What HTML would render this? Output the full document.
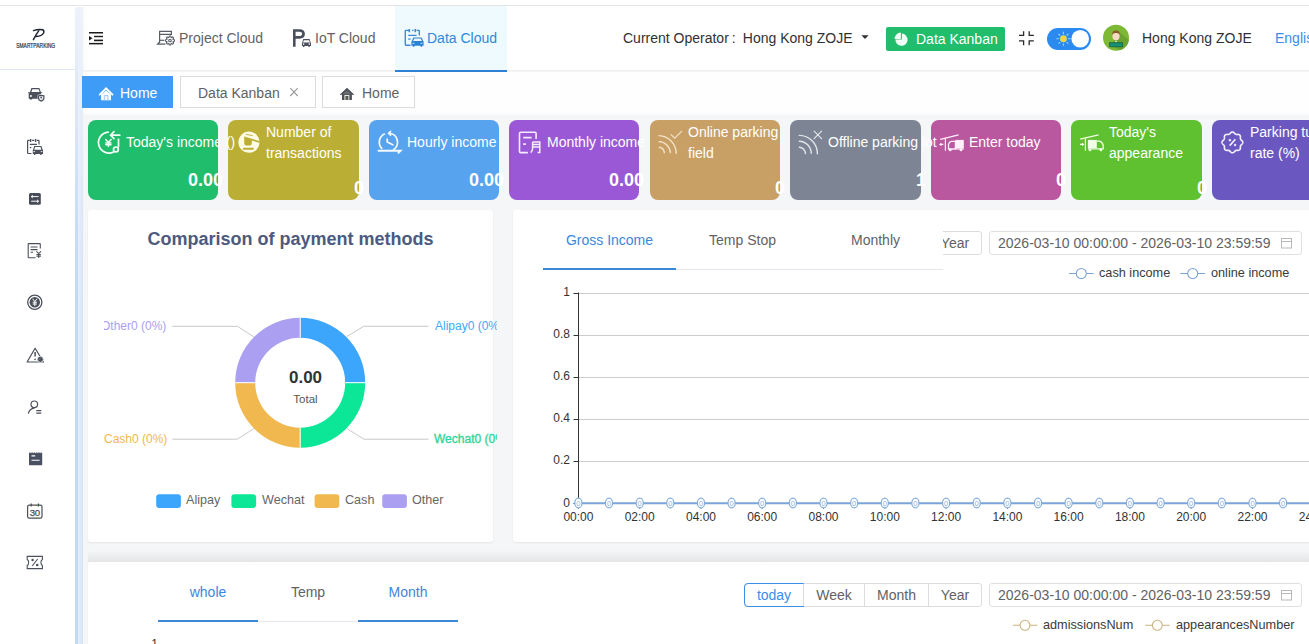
<!DOCTYPE html>
<html><head><meta charset="utf-8">
<style>
*{box-sizing:border-box;margin:0;padding:0}
html,body{width:1309px;height:644px;overflow:hidden;background:#fff;font-family:"Liberation Sans",sans-serif;position:relative}
.abs{position:absolute}
#topline{left:0;top:5px;width:1309px;height:1px;background:#e4e4e4}
#sidebar{left:0;top:6px;width:75px;height:638px;background:#fff}
#sbshadow{left:75px;top:7px;width:8px;height:637px;background:linear-gradient(#edf3fb,#dce8f7 100px,#c8dcf4 220px,#c2d8f3 300px)}
#sbshadow2{left:78px;top:7px;width:10px;height:637px;background:linear-gradient(to right,rgba(238,240,250,0.9),rgba(243,244,245,0.3) 60%,rgba(243,244,245,0))}
#logo{left:0;top:6px;width:75px;height:64px;border-bottom:1px solid #dde6f3}
#header{left:81px;top:6px;width:1228px;height:64px;background:#fff}
#hdrline{left:81px;top:70px;width:1228px;height:2px;background:linear-gradient(#eeeeee,#f6f6f6)}
.nav{top:6px;height:64px;font-size:14px;color:#606266;line-height:64px;white-space:nowrap}
#content{left:81px;top:112px;width:1228px;height:532px;background:linear-gradient(#fff,#f5f6f7 4px,#f5f6f7)}
#tabsbar{left:81px;top:72px;width:1228px;height:40px;background:#fefefe}
.tab{top:76px;height:32px;border:1px solid #dcdcdc;font-size:14px;color:#606266;line-height:32px;white-space:nowrap;background:#fff}
.card{top:120px;height:80px;border-radius:8px}
.ct{font-size:14px;color:#fff;white-space:nowrap;line-height:21px}
.cv{font-size:18px;font-weight:bold;color:#fff;top:167px;white-space:nowrap;line-height:24px}
.panel{background:#fff;border-radius:3px;box-shadow:0 1px 2px rgba(0,0,0,0.07)}
.axis{font-size:12px;color:#333;white-space:nowrap}
.lbl{font-size:12px;white-space:nowrap;line-height:14px}
.leg{top:493px;font-size:12.6px;color:#666;white-space:nowrap;line-height:15px}
.rtab{top:230px;width:133px;text-align:center;font-size:14px;color:#606266;line-height:20px;white-space:nowrap}
.bgrp{display:flex;height:24px;border:1px solid #dcdcdc;border-radius:3px;background:#fff}
.bgrp span{display:block;height:22px;line-height:23px;font-size:14px;color:#606266;text-align:center;border-left:1px solid #dcdcdc;white-space:nowrap}
.bgrp span:nth-child(1){width:58px}.bgrp span:nth-child(2){width:61px}.bgrp span:nth-child(3){width:64px}.bgrp span:nth-child(4){width:53px}
.bgrp span:first-child{border-left:none}
.bgrp span.on{color:#3a8ee6;outline:1px solid #3a8ee6;outline-offset:0;border-radius:3px 0 0 3px}
.dp{width:313px;height:24px;border:1px solid #e0e0e0;border-radius:3px;font-size:14px;color:#606266;line-height:22px;padding-left:8px;white-space:nowrap;background:#fff}
.leg2{font-size:12.7px;color:#3a3a3a;margin-top:1px;white-space:nowrap;line-height:15px}
.ylab{left:520px;width:50px;text-align:right;font-size:12px;color:#333;line-height:14px}
.xlab{width:60px;text-align:center;font-size:12px;color:#333;line-height:14px}
.btab{top:582px;width:100px;text-align:center;font-size:14px;color:#606266;line-height:20px;white-space:nowrap}
</style></head><body>
<div class="abs" id="topline"></div>
<div class="abs" id="sidebar"></div>
<div class="abs" id="logo"></div>
<div class="abs" id="header"></div>
<div class="abs" id="hdrline"></div>
<div class="abs" id="tabsbar"></div>
<div class="abs" id="content"></div>
<div class="abs" id="sbshadow"></div><div class="abs" id="sbshadow2"></div>

<!-- nav -->
<div class="abs nav" style="left:179px">Project Cloud</div>
<div class="abs nav" style="left:315px">IoT Cloud</div>
<div class="abs" style="left:395px;top:6px;width:112px;height:64px;background:#effaff"></div><div class="abs" style="left:395px;top:70px;width:112px;height:2px;background:#3081d6"></div>
<div class="abs nav" style="left:427px;color:#2f88d9">Data Cloud</div>
<div class="abs nav" style="left:623px;color:#303133">Current Operator<span style="display:inline-block;width:14px;padding-left:3px">:</span>Hong Kong ZOJE</div>
<div class="abs" style="left:886px;top:27px;width:119px;height:24px;background:#1fbd6c;border-radius:2px"></div>
<div class="abs nav" style="left:916px;top:7px;color:#fff">Data Kanban</div>
<div class="abs nav" style="left:1142px;color:#303133">Hong Kong ZOJE</div>
<div class="abs nav" style="left:1275px;color:#3a8ee6">English</div>

<!-- tabs -->
<div class="abs tab" style="left:82px;width:91px;background:#3e9cf6;border-color:#3e9cf6;color:#fff;padding-left:37px">Home</div>
<div class="abs tab" style="left:180px;width:136px;padding-left:17px">Data Kanban</div>
<div class="abs tab" style="left:322px;width:93px;padding-left:39px">Home</div>

<!-- cards -->
<div class="abs card" style="left:88px;width:130px;background:#1fbd6c"><div class="abs cv" style="right:-5px;top:48px">0.00</div></div>
<div class="abs card" style="left:228px;width:131px;background:#bbae35"><div class="abs cv" style="right:-5px;top:56px">0</div></div>
<div class="abs card" style="left:369px;width:130px;background:#57a3ee"><div class="abs cv" style="right:-5px;top:48px">0.00</div></div>
<div class="abs card" style="left:509px;width:130px;background:#9a57d6"><div class="abs cv" style="right:-5px;top:48px">0.00</div></div>
<div class="abs card" style="left:650px;width:130px;background:#c8a066"><div class="abs cv" style="right:-5px;top:56px">0</div></div>
<div class="abs card" style="left:790px;width:131px;background:#7d8594"><div class="abs cv" style="right:-5px;top:48px">1</div></div>
<div class="abs card" style="left:931px;width:130px;background:#b9579f"><div class="abs cv" style="right:-5px;top:48px">0</div></div>
<div class="abs card" style="left:1071px;width:131px;background:#5fc030"><div class="abs cv" style="right:-5px;top:56px">0</div></div>
<div class="abs card" style="left:1212px;width:130px;background:#6a58c0"><div class="abs cv" style="right:-5px;top:56px">0</div></div>

<div class="abs ct" style="left:126px;top:132px">Today's income ()</div>
<div class="abs ct" style="left:266px;top:122px">Number of<br>transactions</div>
<div class="abs ct" style="left:407px;top:132px">Hourly income</div>
<div class="abs ct" style="left:547px;top:132px">Monthly income</div>
<div class="abs ct" style="left:688px;top:122px">Online parking<br>field</div>
<div class="abs ct" style="left:828px;top:132px">Offline parking lot</div>
<div class="abs ct" style="left:969px;top:132px">Enter today</div>
<div class="abs ct" style="left:1109px;top:122px">Today's<br>appearance</div>
<div class="abs ct" style="left:1250px;top:122px">Parking turnover<br>rate (%)</div>

<!-- panels -->
<div class="abs panel" style="left:88px;top:210px;width:405px;height:332px"></div>
<div class="abs panel" style="left:513px;top:210px;width:800px;height:332px"></div>
<div class="abs" style="left:88px;top:551px;width:1221px;height:11px;background:linear-gradient(#f4f5f6,#e4e5e7);border-top-left-radius:3px"></div>
<div class="abs panel" style="left:88px;top:562px;width:1225px;height:90px"></div>


<!-- left panel content -->
<div class="abs" style="left:88px;top:227px;width:405px;text-align:center;font-size:18px;font-weight:bold;color:#4c5a7e;white-space:nowrap;line-height:24px">Comparison of payment methods</div>
<div class="abs" style="left:104px;top:300px;width:393px;height:160px;overflow:hidden">
 <div class="abs lbl" style="left:-3px;top:19px;color:#aa9ff0">Other0 (0%)</div>
 <div class="abs lbl" style="left:0px;top:132px;color:#efb84d">Cash0 (0%)</div>
 <div class="abs lbl" style="left:331px;top:19px;color:#3fa9f5">Alipay0 (0%)</div>
 <div class="abs lbl" style="left:330px;top:132px;color:#2fd69a;-webkit-text-stroke:0.35px #2fd69a">Wechat0 (0%)</div>
</div>
<div class="abs" style="left:255.5px;top:368px;width:100px;text-align:center;font-size:17px;font-weight:bold;color:#333;line-height:20px">0.00</div>
<div class="abs" style="left:255.5px;top:392px;width:100px;text-align:center;font-size:11.5px;color:#555;line-height:14px">Total</div>
<div class="abs leg" style="left:186px">Alipay</div>
<div class="abs leg" style="left:262px">Wechat</div>
<div class="abs leg" style="left:345px">Cash</div>
<div class="abs leg" style="left:412px">Other</div>

<!-- right panel -->
<div class="abs bgrp" style="left:744px;top:231px"><span class="on">today</span><span>Week</span><span>Month</span><span>Year</span></div>
<div class="abs" style="left:513px;top:215px;width:430px;height:60px;background:#fff"></div>
<div class="abs" style="left:543px;top:269px;width:400px;height:1px;background:#e4e7ed"></div>
<div class="abs" style="left:543px;top:268px;width:133px;height:2px;background:#3a87d6"></div>
<div class="abs rtab" style="left:543px;color:#3d86d8">Gross Income</div>
<div class="abs rtab" style="left:676px">Temp Stop</div>
<div class="abs rtab" style="left:809px">Monthly</div>
<div class="abs dp" style="left:989px;top:231px">2026-03-10 00:00:00 - 2026-03-10 23:59:59</div>
<div class="abs leg2" style="left:1099px;top:265px">cash income</div>
<div class="abs leg2" style="left:1211px;top:265px">online income</div>
<div class="abs ylab" style="top:285px">1</div>
<div class="abs ylab" style="top:327px">0.8</div>
<div class="abs ylab" style="top:369px">0.6</div>
<div class="abs ylab" style="top:411px">0.4</div>
<div class="abs ylab" style="top:453px">0.2</div>
<div class="abs ylab" style="top:496px">0</div>
<div class="abs xlab" style="left:548.4px;top:510px">00:00</div>
<div class="abs xlab" style="left:609.7px;top:510px">02:00</div>
<div class="abs xlab" style="left:671.0px;top:510px">04:00</div>
<div class="abs xlab" style="left:732.2px;top:510px">06:00</div>
<div class="abs xlab" style="left:793.5px;top:510px">08:00</div>
<div class="abs xlab" style="left:854.8px;top:510px">10:00</div>
<div class="abs xlab" style="left:916.1px;top:510px">12:00</div>
<div class="abs xlab" style="left:977.4px;top:510px">14:00</div>
<div class="abs xlab" style="left:1038.6px;top:510px">16:00</div>
<div class="abs xlab" style="left:1099.9px;top:510px">18:00</div>
<div class="abs xlab" style="left:1161.2px;top:510px">20:00</div>
<div class="abs xlab" style="left:1222.5px;top:510px">22:00</div>
<div class="abs xlab" style="left:1283.8px;top:510px">24:00</div>

<!-- bottom panel -->
<div class="abs" style="left:158px;top:621px;width:300px;height:1px;background:#e4e7ed"></div>
<div class="abs" style="left:158px;top:620px;width:100px;height:2px;background:#3a87d6"></div>
<div class="abs" style="left:358px;top:620px;width:100px;height:2px;background:#3a87d6"></div>
<div class="abs btab" style="left:158px;color:#3d86d8">whole</div>
<div class="abs btab" style="left:258px">Temp</div>
<div class="abs btab" style="left:358px;color:#3d86d8">Month</div>
<div class="abs bgrp" style="left:744px;top:583px"><span class="on">today</span><span>Week</span><span>Month</span><span>Year</span></div>
<div class="abs dp" style="left:989px;top:583px">2026-03-10 00:00:00 - 2026-03-10 23:59:59</div>
<div class="abs leg2" style="left:1043px;top:617px">admissionsNum</div>
<div class="abs leg2" style="left:1176px;top:617px">appearancesNumber</div>
<div class="abs ylab" style="left:108px;width:50px;top:637px">1</div>

<svg class="abs" style="left:0;top:0" width="1309" height="644" viewBox="0 0 1309 644">
<!-- hamburger -->
<g transform="translate(84,26)" fill="#1b1b1b">
<rect x="5" y="6" width="14" height="1.5"/><rect x="10" y="9.8" width="9" height="1.4"/><rect x="10" y="13.6" width="9" height="1.6"/><rect x="5" y="16.9" width="14" height="1.5"/><path d="M5 10 L8.6 12.2 L5 14.4Z"/>
</g>
<!-- project cloud icon -->
<g transform="translate(154,26)" fill="none" stroke="#575c66" stroke-width="1.2">
<path d="M5.6 17 V5.4 H17.4 V8.4 H5.6"/><path d="M5.6 16 L3.6 18.2 H11.4"/><path d="M5.6 14.3 H10.4"/>
<path d="M19.15 13.52 L20.44 13.74 L20.44 15.26 L19.15 15.48 L18.92 16.04 L19.67 17.10 L18.60 18.17 L17.54 17.42 L16.98 17.65 L16.76 18.94 L15.24 18.94 L15.02 17.65 L14.46 17.42 L13.40 18.17 L12.33 17.10 L13.08 16.04 L12.85 15.48 L11.56 15.26 L11.56 13.74 L12.85 13.52 L13.08 12.96 L12.33 11.90 L13.40 10.83 L14.46 11.58 L15.02 11.35 L15.24 10.06 L16.76 10.06 L16.98 11.35 L17.54 11.58 L18.60 10.83 L19.67 11.90 L18.92 12.96Z" stroke-width="1.1" stroke-linejoin="round"/><circle cx="16" cy="14.5" r="1.3" stroke-width="1.1"/>
</g>
<!-- IoT P icon -->
<g transform="translate(288,26)" fill="#4a505e">
<path d="M5 3.2 H11.5 C15 3.2 16.9 5.2 16.9 8 C16.9 10.8 15 12.7 11.5 12.7 H7.6 V20.7 H5 Z M7.6 5.8 V10.1 H11.3 C13.1 10.1 14.1 9.3 14.1 8 C14.1 6.6 13.1 5.8 11.3 5.8 Z"/>
<path d="M15.2 13.1 H21.6 L22.6 16.4 L23 17 V20 H21.8 V20.9 H20.4 V20 H16.4 V20.9 H15 V20 H13.9 V17 L14.3 16.4 Z M15.8 14.2 L15.1 16.4 H21.9 L21.1 14.2 Z" fill-rule="evenodd"/>
<circle cx="15.6" cy="18.1" r="0.8" fill="#fff"/><circle cx="21.3" cy="18.1" r="0.8" fill="#fff"/>
</g>
<!-- data cloud icon -->
<g transform="translate(400,26)">
<path d="M9 4.4 H6 Q5.3 4.4 5.3 5.1 V18.6 Q5.3 19.3 6 19.3 H10.5 M12 4.4 H13.5 M16.6 4.4 H18.6 Q19.3 4.4 19.3 5.1 V9.6" fill="none" stroke="#3a8ad8" stroke-width="1.4"/>
<path d="M9.3 3.1 V6.3 M15.3 3.1 V6.3" stroke="#3a8ad8" stroke-width="1.6"/>
<path d="M8.2 9.3 H16.6 M8.2 13.2 H10.6" stroke="#3a8ad8" stroke-width="1.2"/>
<path d="M13.4 11.4 H21.6 L23.2 15 L23.6 15.4 V19.8 H22.2 V20.8 H20.6 V19.8 H14.4 V20.8 H12.8 V19.8 H11.4 V15.4 L11.8 15 Z" fill="#2a82d6"/>
<path d="M14.2 12.4 H20.8 L21.9 14.9 H13.1 Z" fill="#eaf6ff"/>
<rect x="12.6" y="16.8" width="1.8" height="1" fill="#cfefff"/><rect x="20.6" y="16.8" width="1.8" height="1" fill="#cfefff"/>
</g>
<!-- kanban pie -->
<g transform="translate(888,28)" fill="#f2fff6">
<path d="M13.9 5.6 A6.1 6.1 0 1 1 7.4 11.6 H13.9 Z"/>
<path d="M12.9 4.6 V10.9 H6.6 A6.3 6.3 0 0 1 12.9 4.6 Z"/>
</g>
<path d="M861.4 35.3 H868.6 L865 39Z" fill="#303133"/>
<!-- compress -->
<g transform="translate(1014,26)" fill="none" stroke="#2a2a2a" stroke-width="1.3">
<path d="M5 9.3 H9.6 V5.2 M15.2 5.2 V9.3 H19.8 M5 14.9 H9.6 V19.3 M19.8 14.9 H15.2 V19.3"/>
</g>
<!-- toggle -->
<rect x="1047" y="28" width="44" height="22" rx="11" fill="#2b8af0"/>
<circle cx="1080.2" cy="38.8" r="8.8" fill="#fff"/>
<g transform="translate(1063.4,38.8)" stroke="#9bd4f7" stroke-width="1.1">
<path d="M0 -7 V-4.6 M0 4.6 V7 M-7 0 H-4.6 M4.6 0 H7 M-4.9 -4.9 L-3.3 -3.3 M3.3 3.3 L4.9 4.9 M-4.9 4.9 L-3.3 3.3 M3.3 -3.3 L4.9 -4.9"/>
<circle r="3.2" fill="#f3d23a" stroke="#cfe48a" stroke-width="0.6"/>
</g>
<!-- avatar -->
<circle cx="1116" cy="37.7" r="13" fill="#7db935"/>
<path d="M1118 31 L1129 40 A13 13 0 0 1 1120 50.2 L1112 46 Z" fill="#6aa02f" opacity="0.9"/>
<path d="M1109.5 42.6 H1122.5 V46.8 H1109.5 Z" fill="#169072" stroke="#0d4f3c" stroke-width="0.6"/>
<ellipse cx="1116" cy="36" rx="3.6" ry="4.4" fill="#f4dcc4"/>
<path d="M1112.2 35 Q1111.8 30.5 1116 30.4 Q1120.3 30.5 1119.8 35 Q1118.5 32.6 1116 33 Q1113.5 32.6 1112.2 35Z" fill="#8a5a2a"/>
<path d="M1115 41 H1117 L1116 42.5Z" fill="#fff"/>

<!-- tab icons -->
<g transform="translate(94,80)">
<path d="M12.1 10.6 L17 14.6 V20.3 H7.1 V14.6 Z" fill="#fff"/>
<path d="M5.7 14.6 L12.1 8.4 L18.5 14.6" fill="none" stroke="#fff" stroke-width="1.9" stroke-linecap="round"/>
<rect x="10.2" y="15.7" width="3.8" height="4.6" fill="#f6f2ff" stroke="#7ab6fa" stroke-width="0.7"/>
</g>
<path d="M290.3 88.2 L297.7 96 M297.7 88.2 L290.3 96" stroke="#9a9a9a" stroke-width="1.1"/>
<g transform="translate(334,80)">
<path d="M13 7.8 L20.1 14.4 L19 15.3 L17.9 14.3 V19.9 H8 V14.3 L6.9 15.3 L5.9 14.4 Z" fill="#4d4f56"/>
<path d="M13 10.2 L17 13.9 V14.2 H9 V13.9 Z" fill="#6b6e76"/>
<rect x="10.4" y="15" width="5" height="4.9" fill="#e9ebe6"/><rect x="11.4" y="16" width="3" height="3.9" fill="#595c55"/>
</g>
<!-- card icons -->
<g transform="translate(94,126)" fill="none" stroke="#f4fff8" stroke-width="1.7" stroke-linecap="round">
<path d="M14.2 6.1 A10.5 10.5 0 1 0 19.6 26.0"/>
<path d="M24.5 13.3 V20.6"/>
<circle cx="21.9" cy="23.4" r="2.4"/>
<path d="M25.8 9.2 H16.8 M20 5.7 L16.6 9.2 L20 12.6"/>
<path d="M11.7 13.5 L14.4 16.5 L17.1 13.5 M14.4 16.5 V20.5 M11.8 17 H17 M11.8 18.7 H17" stroke-width="1.5"/>
</g>
<g transform="translate(234,126)">
<circle cx="15" cy="16.2" r="10.6" fill="#fdfbe6"/>
<path d="M11.8 8.3 L18.8 9.7" stroke="#bcae35" stroke-width="0.9"/>
<path d="M10.2 10.4 L26 15.2 L25.8 16.9 L17.8 14.6 V17.6 Q17.8 19.4 16 19.4 H12 Q10.2 19.4 10.2 17.6 Z" fill="#bcae35"/>
<rect x="8.8" y="21.7" width="11.1" height="2.1" rx="1" fill="#bcae35"/>
</g>
<g transform="translate(374,126)" fill="none" stroke="#f4faff" stroke-width="1.7" stroke-linecap="round">
<path d="M10.33 8.06 A9.1 9.1 0 0 0 7.74 22.4"/>
<path d="M15.98 7.24 A9.1 9.1 0 0 1 19.62 23.65"/>
<path d="M16.6 5.4 L14.6 7.3 L16.6 9.2" stroke-width="1.6"/>
<path d="M13.2 13.2 V16 L18.8 18.8"/>
<path d="M4.5 24.8 H26.6 L24.4 26.9" stroke-width="1.9"/>
</g>
<g transform="translate(514,126)" fill="none" stroke="#f6ecff" stroke-width="1.6">
<path d="M22.1 12.9 V7.4 Q22.1 6.2 20.9 6.2 H6.7 Q5.5 6.2 5.5 7.4 V25.4 Q5.5 26.6 6.7 26.6 H13.9"/>
<path d="M9.2 11.7 H17.6 M9.2 18.1 H11.9" stroke-width="1.7"/>
<path d="M18.6 16 H25.8 V26.4 H23.6 M18.6 16 V22.5 Q18.6 25 16.7 26.6 M19 18.4 H25.6 M19 20.9 H25.6" stroke-width="1.5"/>
</g>
<g transform="translate(654,122)" fill="none" stroke="#f8ead3" stroke-width="1.4" stroke-linecap="round" opacity="0.9">
<path d="M5 13.6 A17.8 17.8 0 0 1 22.2 31.2"/>
<path d="M5 19.6 A11.8 11.8 0 0 1 16.4 30.6"/>
<path d="M5.3 25.3 A6 6 0 0 1 10.3 30.8"/>
<path d="M17.1 12.6 L20.7 16.2 L27.6 9.3" stroke-width="1.2"/>
</g>
<g transform="translate(794,122)" fill="none" stroke="#eef0f4" stroke-width="1.4" stroke-linecap="round" opacity="0.9">
<path d="M5.3 13.4 A18.3 18.3 0 0 1 23.4 31.8"/>
<path d="M5.3 19.2 A12.1 12.1 0 0 1 17.2 31.2"/>
<path d="M5.3 25.3 A6.2 6.2 0 0 1 11.4 31.5"/>
<path d="M20.1 9.2 L27.6 16.7 M27.6 9.2 L20.1 16.7" stroke-width="1.2"/>
</g>
<g transform="translate(934,126)" stroke="#fff0fb" stroke-width="1.2" fill="none">
<path d="M6.2 13.3 L24.6 8.9" stroke-width="1.3"/>
<path d="M11.4 12.3 V24.8"/>
<path d="M9.4 18.4 H6 M7.4 17.2 L6 18.4 L7.4 19.6"/>
<path d="M21.4 15.3 H17.3 Q15.3 15.6 14.5 18.5 V23 H21.4 Z" stroke-width="1.3"/>
<rect x="21.4" y="13.9" width="8.4" height="8.2" fill="#fff0fb" stroke="none"/>
<path d="M21.4 22.9 H29.8" stroke-width="1.3"/>
<circle cx="16.2" cy="23.9" r="1.4" fill="#fff0fb" stroke="none"/><circle cx="27" cy="23.9" r="1.4" fill="#fff0fb" stroke="none"/>
</g>
<g transform="translate(1074,126)" stroke="#f2fde8" stroke-width="1.2" fill="none">
<path d="M6.2 13.2 L24.6 8.9" stroke-width="1.3"/>
<path d="M11.4 12.3 V24.7"/>
<path d="M6 18.4 H9.4 M8 17.2 L9.4 18.4 L8 19.6"/>
<rect x="13.9" y="13.9" width="8.9" height="8.2" fill="#f2fde8" stroke="none"/>
<path d="M22.8 15.2 H25.6 Q28.7 16.5 29.2 19.5 V22.9 H14" stroke-width="1.3"/>
<circle cx="16" cy="23.9" r="1.4" fill="#f2fde8" stroke="none"/><circle cx="26.9" cy="23.9" r="1.4" fill="#f2fde8" stroke="none"/>
</g>
<g transform="translate(1214,126)" fill="none" stroke="#f1efff" stroke-width="1.6">
<path d="M18.40 6.00 L18.73 6.03 L19.05 6.12 L19.36 6.26 L19.66 6.45 L19.94 6.67 L20.21 6.92 L20.46 7.18 L20.70 7.43 L20.94 7.67 L21.17 7.89 L21.40 8.07 L21.64 8.21 L21.90 8.32 L22.17 8.39 L22.46 8.42 L22.78 8.43 L23.11 8.43 L23.46 8.42 L23.82 8.42 L24.19 8.43 L24.55 8.48 L24.89 8.55 L25.21 8.67 L25.50 8.84 L25.75 9.05 L25.96 9.30 L26.13 9.59 L26.25 9.91 L26.32 10.25 L26.37 10.61 L26.38 10.98 L26.38 11.34 L26.37 11.69 L26.37 12.02 L26.38 12.34 L26.41 12.63 L26.48 12.90 L26.59 13.16 L26.73 13.40 L26.91 13.63 L27.13 13.86 L27.37 14.10 L27.62 14.34 L27.88 14.59 L28.13 14.86 L28.35 15.14 L28.54 15.44 L28.68 15.75 L28.77 16.07 L28.80 16.40 L28.77 16.73 L28.68 17.05 L28.54 17.36 L28.35 17.66 L28.13 17.94 L27.88 18.21 L27.62 18.46 L27.37 18.70 L27.13 18.94 L26.91 19.17 L26.73 19.40 L26.59 19.64 L26.48 19.90 L26.41 20.17 L26.38 20.46 L26.37 20.78 L26.37 21.11 L26.38 21.46 L26.38 21.82 L26.37 22.19 L26.32 22.55 L26.25 22.89 L26.13 23.21 L25.96 23.50 L25.75 23.75 L25.50 23.96 L25.21 24.13 L24.89 24.25 L24.55 24.32 L24.19 24.37 L23.82 24.38 L23.46 24.38 L23.11 24.37 L22.78 24.37 L22.46 24.38 L22.17 24.41 L21.90 24.48 L21.64 24.59 L21.40 24.73 L21.17 24.91 L20.94 25.13 L20.70 25.37 L20.46 25.62 L20.21 25.88 L19.94 26.13 L19.66 26.35 L19.36 26.54 L19.05 26.68 L18.73 26.77 L18.40 26.80 L18.07 26.77 L17.75 26.68 L17.44 26.54 L17.14 26.35 L16.86 26.13 L16.59 25.88 L16.34 25.62 L16.10 25.37 L15.86 25.13 L15.63 24.91 L15.40 24.73 L15.16 24.59 L14.90 24.48 L14.63 24.41 L14.34 24.38 L14.02 24.37 L13.69 24.37 L13.34 24.38 L12.98 24.38 L12.61 24.37 L12.25 24.32 L11.91 24.25 L11.59 24.13 L11.30 23.96 L11.05 23.75 L10.84 23.50 L10.67 23.21 L10.55 22.89 L10.48 22.55 L10.43 22.19 L10.42 21.82 L10.42 21.46 L10.43 21.11 L10.43 20.78 L10.42 20.46 L10.39 20.17 L10.32 19.90 L10.21 19.64 L10.07 19.40 L9.89 19.17 L9.67 18.94 L9.43 18.70 L9.18 18.46 L8.92 18.21 L8.67 17.94 L8.45 17.66 L8.26 17.36 L8.12 17.05 L8.03 16.73 L8.00 16.40 L8.03 16.07 L8.12 15.75 L8.26 15.44 L8.45 15.14 L8.67 14.86 L8.92 14.59 L9.18 14.34 L9.43 14.10 L9.67 13.86 L9.89 13.63 L10.07 13.40 L10.21 13.16 L10.32 12.90 L10.39 12.63 L10.42 12.34 L10.43 12.02 L10.43 11.69 L10.42 11.34 L10.42 10.98 L10.43 10.61 L10.48 10.25 L10.55 9.91 L10.67 9.59 L10.84 9.30 L11.05 9.05 L11.30 8.84 L11.59 8.67 L11.91 8.55 L12.25 8.48 L12.61 8.43 L12.98 8.42 L13.34 8.42 L13.69 8.43 L14.02 8.43 L14.34 8.42 L14.63 8.39 L14.90 8.32 L15.16 8.21 L15.40 8.07 L15.63 7.89 L15.86 7.67 L16.10 7.43 L16.34 7.18 L16.59 6.92 L16.86 6.67 L17.14 6.45 L17.44 6.26 L17.75 6.12 L18.07 6.03 L18.40 6.00Z"/>
<path d="M15.7 19.6 L21.4 13.2"/>
<circle cx="15.9" cy="14.2" r="0.9" fill="#f1efff" stroke-width="0.8"/><circle cx="21.1" cy="19" r="0.9" fill="#f1efff" stroke-width="0.8"/>
</g>

<!-- donut -->
<g transform="translate(300.2,382.7)">
<path d="M0 -65 A65 65 0 0 1 65 0 H45 A45 45 0 0 0 0 -45Z" fill="#3ba6fc"/>
<path d="M65 0 A65 65 0 0 1 0 65 V45 A45 45 0 0 0 45 0Z" fill="#0ce697"/>
<path d="M0 65 A65 65 0 0 1 -65 0 H-45 A45 45 0 0 0 0 45Z" fill="#f0b84f"/>
<path d="M-65 0 A65 65 0 0 1 0 -65 V-45 A45 45 0 0 0 -45 0Z" fill="#aa9ff0"/>
<path d="M0 -65 V-45 M65 0 H45 M0 65 V45 M-65 0 H-45" stroke="#fff" stroke-width="1"/>
</g>
<path d="M172.3 326.3 H237.4 L254 337 M428.6 326.3 H363.8 L347 336.5 M172.3 439.2 H237.4 L254 428.5 M428.6 439.2 H363.8 L347 428.5" fill="none" stroke="#c9c9c9" stroke-width="1"/>
<rect x="156.2" y="494.2" width="24.7" height="13.7" rx="3" fill="#3ba6fc"/>
<rect x="231.4" y="494.2" width="24.7" height="13.7" rx="3" fill="#0ce697"/>
<rect x="314.6" y="494.2" width="24.7" height="13.7" rx="3" fill="#f0b84f"/>
<rect x="382.2" y="494.2" width="24.7" height="13.7" rx="3" fill="#aa9ff0"/>

<!-- line chart -->
<g stroke="#cccccc" stroke-width="1">
<path d="M579 293.5 H1309 M579 335.5 H1309 M579 377.5 H1309 M579 419.5 H1309 M579 461.5 H1309"/>
</g>
<path d="M578.5 292.5 V503.5 M573.5 293.5 H578.5 M573.5 335.5 H578.5 M573.5 377.5 H578.5 M573.5 419.5 H578.5 M573.5 461.5 H578.5 M573.5 503.5 H578.5" stroke="#333" stroke-width="1"/>
<path d="M578.4 503 V508.6 M639.7 503 V508.6 M701.0 503 V508.6 M762.2 503 V508.6 M823.5 503 V508.6 M884.8 503 V508.6 M946.1 503 V508.6 M1007.4 503 V508.6 M1068.6 503 V508.6 M1129.9 503 V508.6 M1191.2 503 V508.6 M1252.5 503 V508.6 M1313.8 503 V508.6 " stroke="#333" stroke-width="1"/>
<path d="M578.4 503.2 H1309" stroke="#7aa5d8" stroke-width="2"/>
<g fill="#fff" stroke="#84acdd" stroke-width="1.2"><ellipse cx="578.4" cy="503" rx="3.6" ry="4.9"/><ellipse cx="609.0" cy="503" rx="3.6" ry="4.9"/><ellipse cx="639.7" cy="503" rx="3.6" ry="4.9"/><ellipse cx="670.3" cy="503" rx="3.6" ry="4.9"/><ellipse cx="701.0" cy="503" rx="3.6" ry="4.9"/><ellipse cx="731.6" cy="503" rx="3.6" ry="4.9"/><ellipse cx="762.2" cy="503" rx="3.6" ry="4.9"/><ellipse cx="792.9" cy="503" rx="3.6" ry="4.9"/><ellipse cx="823.5" cy="503" rx="3.6" ry="4.9"/><ellipse cx="854.2" cy="503" rx="3.6" ry="4.9"/><ellipse cx="884.8" cy="503" rx="3.6" ry="4.9"/><ellipse cx="915.4" cy="503" rx="3.6" ry="4.9"/><ellipse cx="946.1" cy="503" rx="3.6" ry="4.9"/><ellipse cx="976.7" cy="503" rx="3.6" ry="4.9"/><ellipse cx="1007.4" cy="503" rx="3.6" ry="4.9"/><ellipse cx="1038.0" cy="503" rx="3.6" ry="4.9"/><ellipse cx="1068.6" cy="503" rx="3.6" ry="4.9"/><ellipse cx="1099.3" cy="503" rx="3.6" ry="4.9"/><ellipse cx="1129.9" cy="503" rx="3.6" ry="4.9"/><ellipse cx="1160.6" cy="503" rx="3.6" ry="4.9"/><ellipse cx="1191.2" cy="503" rx="3.6" ry="4.9"/><ellipse cx="1221.8" cy="503" rx="3.6" ry="4.9"/><ellipse cx="1252.5" cy="503" rx="3.6" ry="4.9"/><ellipse cx="1283.1" cy="503" rx="3.6" ry="4.9"/><ellipse cx="1313.8" cy="503" rx="3.6" ry="4.9"/></g>
<g fill="#8fb3de" font-size="7.5" font-family="Liberation Sans" text-anchor="middle"><text x="578.4" y="506">0</text><text x="609.0" y="506">0</text><text x="639.7" y="506">0</text><text x="670.3" y="506">0</text><text x="701.0" y="506">0</text><text x="731.6" y="506">0</text><text x="762.2" y="506">0</text><text x="792.9" y="506">0</text><text x="823.5" y="506">0</text><text x="854.2" y="506">0</text><text x="884.8" y="506">0</text><text x="915.4" y="506">0</text><text x="946.1" y="506">0</text><text x="976.7" y="506">0</text><text x="1007.4" y="506">0</text><text x="1038.0" y="506">0</text><text x="1068.6" y="506">0</text><text x="1099.3" y="506">0</text><text x="1129.9" y="506">0</text><text x="1160.6" y="506">0</text><text x="1191.2" y="506">0</text><text x="1221.8" y="506">0</text><text x="1252.5" y="506">0</text><text x="1283.1" y="506">0</text><text x="1313.8" y="506">0</text></g>
<g fill="none" stroke="#7ba4d4" stroke-width="1.1"><path d="M1069 273.5 H1093.6 M1180.4 273.5 H1205"/></g>
<circle cx="1081.3" cy="273.5" r="5" fill="#fff" stroke="#7ba4d4" stroke-width="1.1"/>
<circle cx="1192.7" cy="273.5" r="5" fill="#fff" stroke="#7ba4d4" stroke-width="1.1"/>
<g fill="none" stroke="#b9b9b9" stroke-width="1"><rect x="1281.5" y="238.5" width="10" height="9.5"/><path d="M1281.5 241.5 H1291.5"/></g>
<g fill="none" stroke="#c9b27c" stroke-width="1.1"><path d="M1013 625.3 H1037.3 M1145.2 625.3 H1169.5"/></g>
<circle cx="1025" cy="625.3" r="5" fill="#fff" stroke="#c9b27c" stroke-width="1.1"/>
<circle cx="1157.3" cy="625.3" r="5" fill="#fff" stroke="#c9b27c" stroke-width="1.1"/>
<g fill="none" stroke="#b9b9b9" stroke-width="1"><rect x="1281.5" y="590.5" width="10" height="9.5"/><path d="M1281.5 593.5 H1291.5"/></g>

<!-- logo -->
<g transform="translate(10,25)">
<path d="M23.5 5.6 Q28 4.2 32.6 4.8 Q34.4 5.5 33.6 8 Q32 11 26 11.6 M29 5.4 Q26 9.5 23.4 14.6" fill="none" stroke="#1d2334" stroke-width="1.5" stroke-linecap="round"/>
</g>
<text x="35.7" y="47.8" font-family="Liberation Sans" font-size="6.4" fill="#2e3038" stroke="#2e3038" stroke-width="0.2" text-anchor="middle" textLength="39" lengthAdjust="spacingAndGlyphs">SMARTPARKING</text>
<!-- sidebar icons -->
<g fill="#4b505b">
<!-- car shield -->
<path d="M31.4 87.9 H39.4 L40.9 92.3 H42.2 V93.1 H41.1 V98.8 H40 V99.6 H37.6 V98.8 H32.2 V99.6 H29.8 V98.8 H28.7 V93.1 H29 H28 V92.3 H29.9 Z M32.3 89.2 L31.4 92 H39.6 L38.7 89.2 Z" fill-rule="evenodd"/>
<circle cx="30.9" cy="96" r="0.95" fill="#fff"/>
<path d="M37.6 95.1 Q41.2 93.6 44.8 95.1 V98.4 Q44.8 100.9 41.2 102 Q37.6 100.9 37.6 98.4 Z" fill="#fff"/>
<path d="M38.5 95.8 Q41.2 94.9 43.9 95.8 V98.3 Q43.9 100.2 41.2 101.1 Q38.5 100.2 38.5 98.3 Z" fill="#e9eaee" stroke="#4b505b" stroke-width="1.2"/>
<path d="M39.9 96.8 L41.2 98.8 L42.5 96.8 Z" fill="#4b505b"/>
</g>
<g fill="none" stroke="#4b505b" stroke-width="1.2">
<path d="M29.6 140.4 H28.3 Q27.6 140.4 27.6 141.1 V152.8 Q27.6 153.5 28.3 153.5 H31.4 M32 140.4 H34.2 M37 140.4 H38.3 Q39 140.4 39 141.1 V144.4"/>
<path d="M30.6 139.1 V142 M35.6 139.1 V142" stroke-width="1.5"/>
<path d="M29.8 144.4 H37 M29.8 147.6 H31.2"/>
</g>
<path d="M34.2 146 H41.4 L42.6 149.6 L43 150 V154 H41.6 V154.9 H40.2 V154 H35.4 V154.9 H34 V154 H32.8 V150 L33.2 149.6 Z" fill="#4b505b"/>
<path d="M35.1 147.1 H40.5 L41.4 149.8 H34.2 Z" fill="#fff"/>
<rect x="33.5" y="151.2" width="1.6" height="0.9" fill="#fff"/><rect x="40.7" y="151.2" width="1.6" height="0.9" fill="#fff"/>
<rect x="29" y="193" width="11.8" height="11.8" rx="1.5" fill="#464b57"/>
<path d="M31.2 196.6 H38.6 M32.8 195.2 L31.2 196.6 L32.8 198 M31.2 201.2 H38.6 M37 199.8 L38.6 201.2 L37 202.6" stroke="#fff" stroke-width="1" fill="none"/>
<g fill="none" stroke="#4b505b" stroke-width="1.1">
<path d="M40.3 248.5 V244.2 Q40.3 243.6 39.7 243.6 H28.8 Q28.2 243.6 28.2 244.2 V257.2 Q28.2 257.8 28.8 257.8 H35.5"/>
<path d="M30.6 247 H37.6 M30.6 249.6 H37.6 M30.6 252.3 H33"/>
<path d="M36.4 251.4 L38.7 253.6 L41 251.4 M38.7 253.6 V258 M36.5 254.6 H40.9 M36.5 256.2 H40.9"/>
</g>
<circle cx="34.8" cy="302.2" r="7.1" fill="none" stroke="#4b505b" stroke-width="1.3"/>
<circle cx="34.8" cy="302.2" r="5.2" fill="#4b505b"/>
<path d="M32.6 298.8 L34.8 301.5 L37 298.8 M34.8 301.5 V306 M32.7 302.2 H36.9 M32.7 304 H36.9" stroke="#fff" stroke-width="1" fill="none"/>
<path d="M35.1 348.2 L43.5 362 H27.1 Z" fill="none" stroke="#4b505b" stroke-width="1.2" stroke-linejoin="round"/>
<path d="M35.1 352 V356.6" stroke="#4b505b" stroke-width="1.5"/>
<circle cx="35.1" cy="359.4" r="0.8" fill="#4b505b"/>
<circle cx="40.3" cy="359.3" r="3.1" fill="#4b505b" stroke="#fff" stroke-width="0.8"/>
<path d="M38.6 360.3 L40.8 357.6" stroke="#8a8e98" stroke-width="0.7"/>
<g fill="none" stroke="#4b505b" stroke-width="1.2">
<circle cx="34.3" cy="404.3" r="3.3"/>
<path d="M28.3 413.6 Q29.5 408.8 34.4 408.2"/>
</g>
<path d="M36.3 410.6 H41.3 M36.3 413.2 H41.3" stroke="#4b505b" stroke-width="1.2"/>
<rect x="29" y="452.6" width="13.2" height="12.6" rx="0.8" fill="#485061"/>
<g fill="#fff"><circle cx="31" cy="452.6" r="0.55"/><circle cx="33.3" cy="452.6" r="0.55"/><circle cx="35.6" cy="452.6" r="0.55"/><circle cx="37.9" cy="452.6" r="0.55"/><circle cx="40.2" cy="452.6" r="0.55"/></g>
<path d="M31.5 455.9 H35.2 M31.5 460.2 H39.6" stroke="#fff" stroke-width="1.1"/>
<g fill="none" stroke="#4b505b" stroke-width="1.2">
<rect x="27.6" y="505.2" width="14.4" height="12.9" rx="1.6"/>
<path d="M31.2 503.4 V506.6 M38.4 503.4 V506.6" stroke-width="1.3"/>
</g>
<text x="34.8" y="515.9" font-family="Liberation Sans" font-size="9.6" fill="#4b505b" stroke="#4b505b" stroke-width="0.25" text-anchor="middle" letter-spacing="-0.2">30</text>
<g fill="none" stroke="#4b505b" stroke-width="1.1">
<path d="M27.2 556.4 H42.4 V559.6 Q40.9 560.3 40.9 562.5 Q40.9 564.7 42.4 565.4 V568.6 H27.2 V565.4 Q28.7 564.7 28.7 562.5 Q28.7 560.3 27.2 559.6 Z"/>
<path d="M32.2 566 L37.6 559"/>
</g>
<circle cx="32.6" cy="560" r="1.2" fill="#4b505b"/><circle cx="37.2" cy="565" r="1.3" fill="#4b505b"/>
</svg>
</body></html>
